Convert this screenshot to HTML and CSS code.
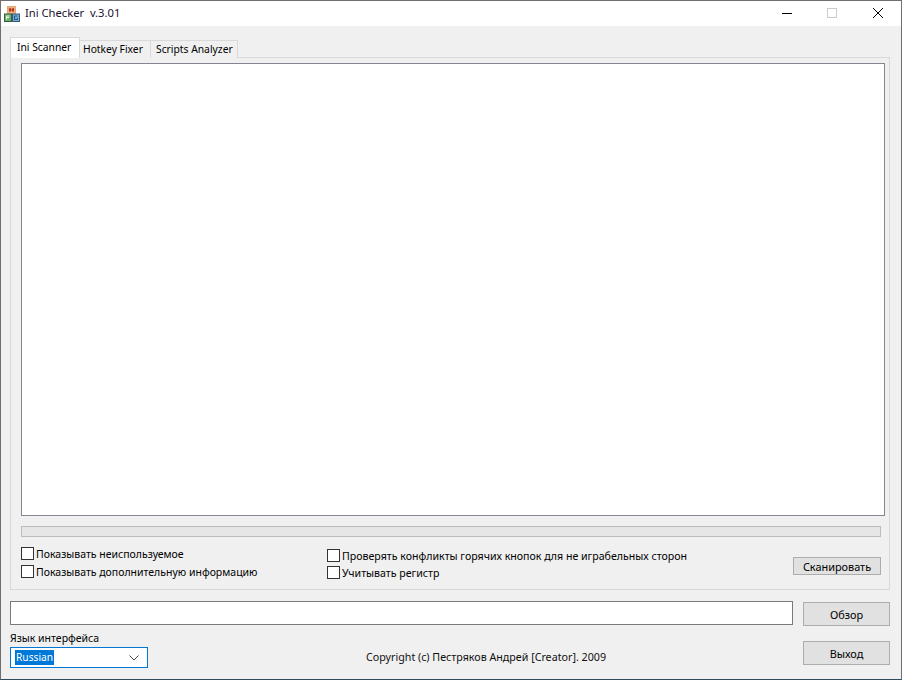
FILE: index.html
```html
<!DOCTYPE html>
<html lang="ru">
<head>
<meta charset="utf-8">
<title>Ini Checker</title>
<link rel="stylesheet" href="styles.css">
</head>
<body>
<div class="window">
  <header class="titlebar">
    <svg class="app-icon" width="16" height="16" viewBox="0 0 16 16">
      <rect x="3.5" y="0.5" width="8" height="7.5" fill="#f0b27a" stroke="#e0a878"/>
      <path d="M5.5 5.5V2.5H6.5V5.5M9.5 5.5V2.5H8.5V5.5M6.5 4H8.5" fill="none" stroke="#b83020"/>
      <rect x="0.5" y="8" width="7" height="7.5" fill="#66b46a" stroke="#3a5a4a"/>
      <path d="M2.5 13.5V10H5.5M2.5 11.5H5" fill="none" stroke="#e8f4e8"/>
      <rect x="8.5" y="8" width="7" height="7.5" fill="#74acd8" stroke="#3a5a70"/>
      <path d="M13.5 10H10.5V13.5H13.5V12" fill="none" stroke="#23568c"/>
    </svg>
    <span class="title">Ini Checker&nbsp; v.3.01</span>
    <div class="controls">
      <svg class="ctl ctl-min" width="10" height="10" viewBox="0 0 10 10"><path d="M0 5.5H10" stroke="#000"/></svg>
      <svg class="ctl ctl-max" width="10" height="10" viewBox="0 0 10 10"><rect x="0.5" y="0.5" width="9" height="9" fill="none" stroke="#ccc"/></svg>
      <svg class="ctl ctl-close" width="10" height="10" viewBox="0 0 10 10"><path d="M0 0L10 10M10 0L0 10" stroke="#000" stroke-width="1"/></svg>
    </div>
  </header>
  <main class="client">
    <nav class="tabs">
      <div class="tab active">Ini Scanner</div>
      <div class="tab tab-hotkey">Hotkey Fixer</div>
      <div class="tab tab-scripts">Scripts Analyzer</div>
    </nav>
    <section class="panel">
      <div class="listbox"></div>
      <div class="progress"></div>
      <div class="options">
        <div class="col col-a">
          <label class="check"><span class="box"></span>Показывать неиспользуемое</label>
          <label class="check"><span class="box"></span>Показывать дополнительную информацию</label>
        </div>
        <div class="col col-b">
          <label class="check"><span class="box"></span>Проверять конфликты горячих кнопок для не играбельных сторон</label>
          <label class="check"><span class="box"></span>Учитывать регистр</label>
        </div>
        <button class="btn btn-scan">Сканировать</button>
      </div>
    </section>
    <div class="path-row">
      <div class="path-input"></div>
      <button class="btn btn-big">Обзор</button>
    </div>
    <div class="bottom-row">
      <div class="lang">
        <div class="lang-label">Язык интерфейса</div>
        <div class="combo"><span class="sel">Russian</span>
          <svg class="chev" width="10" height="6" viewBox="0 0 10 6"><path d="M0.5 0.5L5 5L9.5 0.5" fill="none" stroke="#444"/></svg>
        </div>
      </div>
      <div class="copyright">Copyright (c) Пестряков Андрей [Creator]. 2009</div>
      <button class="btn btn-big">Выход</button>
    </div>
  </main>
</div>
</body>
</html>
```
FILE: styles.css
```css
* { box-sizing: border-box; }
html, body { margin: 0; padding: 0; }
body { width: 902px; height: 680px; overflow: hidden; background: #f0f0f0; font: 10.5px/13px "Noto Sans", "Liberation Sans", sans-serif; color: #000; }
.window { width: 902px; height: 680px; border: 1px solid #6f6f6f; border-bottom-color: #2f4a5a; display: flex; flex-direction: column; }
.titlebar { height: 25px; flex: none; background: #fff; display: flex; align-items: center; padding-left: 3px; }
.app-icon { flex: none; margin-top: 0; }
.title { margin-left: 5px; font-size: 11.2px; color: #1a1030; margin-top: -3px; }
.controls { margin-left: auto; display: flex; align-items: center; padding-right: 18px; margin-top: -1px; }
.ctl { display: block; flex: none; }
.ctl-max { margin-left: 35px; }
.ctl-close { margin-left: 36px; }
.client { flex: 1; padding: 11px 11px 0 9px; display: flex; flex-direction: column; }
.tabs { display: flex; height: 20px; position: relative; z-index: 1; font-size: 10.3px; }
.tab { height: 18px; margin-top: 3px; line-height: 17px; background: #f0f0f0; border: 1px solid #d9d9d9; border-bottom: none; border-left: none; color: #000; white-space: nowrap; }
.tab.active { width: 70px; height: 21px; margin-top: 0; background: #fff; padding: 0 0 0 6px; line-height: 18px; border-left: 1px solid #d9d9d9; }
.tab-hotkey { width: 71px; padding-left: 3px; }
.tab-scripts { width: 87px; padding-left: 5px; }
.panel { height: 533px; border: 1px solid #d9d9d9; padding: 5px 3px 0 10px; }
.listbox { width: 864px; height: 453px; background: #fff; border: 1px solid #828790; }
.progress { width: 860px; height: 11px; margin-top: 10px; background: #e6e6e6; border: 1px solid #bcbcbc; }
.options { display: flex; width: 860px; margin-top: 10px; position: relative; }
.col { display: flex; flex-direction: column; }
.col-a { width: 306px; gap: 5px; }
.col-b { padding-top: 2px; gap: 4px; font-size: 10.6px; }
.check { display: flex; align-items: flex-start; height: 13px; line-height: 15px; white-space: nowrap; }
.box { width: 13px; height: 13px; background: #fff; border: 1px solid #333; margin-right: 2px; flex: none; }
.btn { font: inherit; font-size: 10.9px; color: #000; background: #e1e1e1; border: 1px solid #adadad; padding: 0; }
.btn-scan { width: 88px; height: 18px; margin: 10px 0 0 auto; }
.path-row { display: flex; margin-top: 11px; justify-content: space-between; }
.path-input { width: 783px; height: 24px; background: #fff; border: 1px solid #7a7a7a; }
.btn-big { width: 87px; height: 24px; margin-top: 1px; }
.bottom-row { display: flex; margin-top: 6px; }
.lang { width: 302px; }
.lang-label { height: 15px; }
.combo { width: 138px; height: 21px; background: #fff; border: 1px solid #0078d7; display: flex; align-items: center; padding: 0 4px; position: relative; font-size: 10.2px; }
.sel { background: #0078d7; color: #fff; padding: 0 1px; line-height: 15px; margin-top: -1px; }
.chev { margin-left: auto; margin-right: 4px; }
.copyright { width: 491px; margin-top: 19px; padding-left: 54px; white-space: nowrap; color: #111; font-size: 10.7px; }
.bottom-row .btn-big { margin-top: 9px; }
```
